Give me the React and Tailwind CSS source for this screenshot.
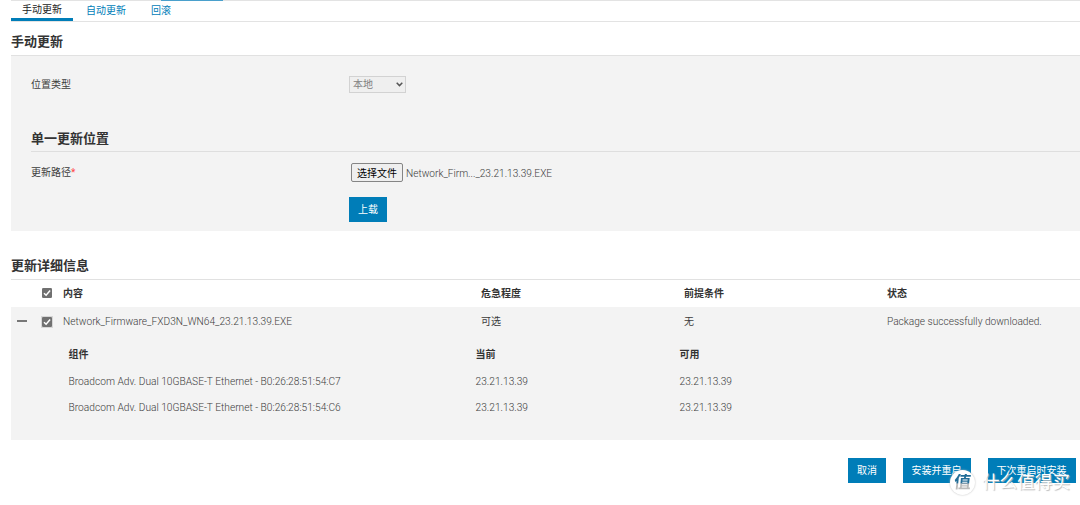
import React from "react";

const components = [
  { name: "Broadcom Adv. Dual 10GBASE-T Ethernet - B0:26:28:51:54:C7", current: "23.21.13.39", available: "23.21.13.39" },
  { name: "Broadcom Adv. Dual 10GBASE-T Ethernet - B0:26:28:51:54:C6", current: "23.21.13.39", available: "23.21.13.39" },
];

function Check({ focused }) {
  return (
    <span className={"-mt-px -ml-px flex size-3 items-center justify-center " + (focused ? "bg-[#d6d6d6]" : "")}>
      <svg viewBox="0 0 10 10" className="size-2.5">
        <rect width="10" height="10" rx="1.3" fill="#707070" />
        <path d="M2 5.2 4.1 7.2 8.1 2.6" fill="none" stroke="#fff" strokeWidth="1.5" />
      </svg>
    </span>
  );
}

function Action({ children, className }) {
  return (
    <button className={"flex h-[25px] items-center justify-center whitespace-nowrap bg-[#007db8] font-normal text-white " + className}>
      {children}
    </button>
  );
}

function Watermark() {
  return (
    <div className="absolute top-[470px] left-[950px] flex items-center gap-[7px]">
      <span className="flex size-[25px] items-center justify-center rounded-full bg-white text-[17px] leading-none font-bold shadow-[0_0_2px_#bbb]">
        <span className="-skew-x-6 bg-linear-to-b from-[#226d97] from-50% to-[#bbb] to-60% bg-clip-text text-transparent">值</span>
      </span>
      <span className="text-[17.6px] leading-[25px] font-normal whitespace-nowrap text-white [text-shadow:1px_1px_1px_#bbb]">什么值得买</span>
    </div>
  );
}

export default function App() {
  return (
    <div className="relative flex h-[505px] w-[1080px] flex-col overflow-hidden bg-white pl-[11px] font-['Roboto','Noto_Sans_CJK_SC',sans-serif] text-[10px] leading-[14px] font-light text-[#3c3c3c]">
      <nav className="flex h-[22px] border-y border-[#e3e3e3] text-[#007db8]">
        <span className="-mb-px h-[20px] w-[62px] border-b-[3px] border-[#007db8] pt-0.5 text-center font-normal text-[#222]">手动更新</span>
        <span className="ml-[13px] w-10 pt-[3px] font-normal">自动更新</span>
        <span className="ml-[25px] pt-[3px] font-normal">回滚</span>
        <span className="-mt-px -ml-[10px] h-px w-[62px] bg-[#4aa0cc]" />
      </nav>

      <h1 className="h-[34px] border-b border-[#e1e1e1] pt-[10px] text-[13px] leading-[20px] font-bold text-[#333]">手动更新</h1>
      <section className="h-[175px] bg-[#f3f3f3] pl-5">
        <div className="flex h-[73px] items-start pt-5">
          <span className="w-[318px] pt-0.5 font-normal">位置类型</span>
          <span className="flex h-[17px] w-[57px] items-center justify-between border border-[#d2d2d2] bg-[#efefef] pr-0.5 pl-[3px] font-normal text-[#808080]">
            本地
            <svg viewBox="0 0 7 5" className="h-[5px] w-[7px]">
              <path d="M.7.8 3.5 3.6 6.3.8" fill="none" stroke="#555" strokeWidth="1.5" />
            </svg>
          </span>
        </div>
        <h2 className="h-[23px] border-b border-[#dedede] text-[13px] leading-[19px] font-bold text-[#333]">单一更新位置</h2>
        <div className="flex h-[45px] items-start pt-[11px]">
          <span className="w-[320px] pt-[3px] font-normal">更新路径<span className="text-[#f44]">*</span></span>
          <button className="h-[19px] w-[52px] rounded-[2px] border border-[#858585] bg-[#efefef] pt-0.5 font-normal text-black">选择文件</button>
          <span className="ml-[3px] pt-1 text-[10.15px]">Network_Firm..._23.21.13.39.EXE</span>
        </div>
        <div className="flex pl-[318px]">
          <Action className="w-[38px]">上载</Action>
        </div>
      </section>

      <h1 className="h-[49px] border-b border-[#e1e1e1] pt-[25px] text-[13px] leading-[20px] font-bold text-[#333]">更新详细信息</h1>
      <div className="grid h-[27px] grid-cols-[31px_21px_418px_203px_203px_1fr] items-center font-bold text-[#333]">
        <span />
        <Check />
        <span>内容</span>
        <span>危急程度</span>
        <span>前提条件</span>
        <span>状态</span>
      </div>
      <section className="h-[133px] bg-[#f3f3f3]">
        <div className="grid h-[30px] grid-cols-[31px_21px_418px_203px_203px_1fr] items-center">
          <svg viewBox="0 0 10 2" className="-mt-0.5 ml-[6px] h-0.5 w-2.5"><path d="M0 1H10" stroke="#333" strokeWidth="1.3" /></svg>
          <Check focused />
          <span className="text-[10.18px]">Network_Firmware_FXD3N_WN64_23.21.13.39.EXE</span>
          <span className="font-normal">可选</span>
          <span className="font-normal">无</span>
          <span className="text-[10.15px]">Package successfully downloaded.</span>
        </div>
        <div className="grid h-[31px] grid-cols-[407px_204px_1fr] items-center pt-1 pl-[57.5px] font-bold text-[#333]">
          <span>组件</span>
          <span>当前</span>
          <span>可用</span>
        </div>
        {components.map((c) => (
          <div key={c.name} className="grid h-[26px] grid-cols-[407px_204px_1fr] items-center pt-px pl-[57.5px] text-[10.2px]">
            <span>{c.name}</span>
            <span>{c.current}</span>
            <span>{c.available}</span>
          </div>
        ))}
      </section>

      <footer className="flex justify-end gap-[17px] pt-[18px] pr-1">
        <Action className="w-[38px]">取消</Action>
        <Action className="w-[68px] pr-px">安装并重启</Action>
        <Action className="w-[88px] pr-px">下次重启时安装</Action>
      </footer>
      <Watermark />
    </div>
  );
}
